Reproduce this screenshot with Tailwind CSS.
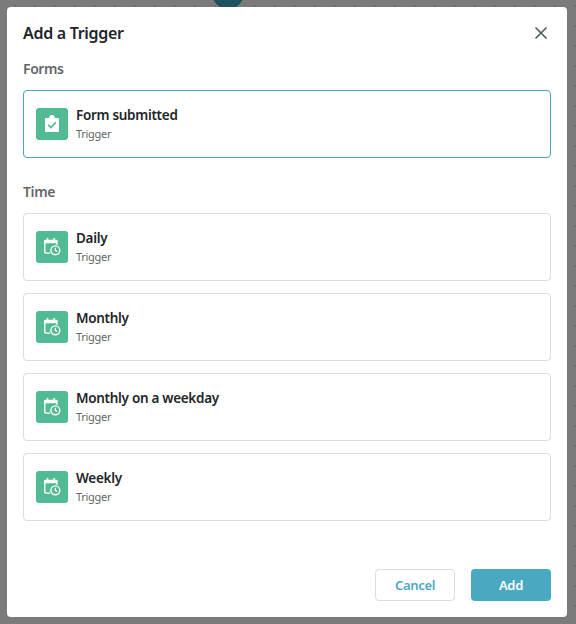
<!DOCTYPE html>
<html>
  <head>
    <meta charset="UTF-8" />
    <meta name="viewport" content="width=device-width, initial-scale=1.0" />
    <script src="https://cdn.jsdelivr.net/npm/@tailwindcss/browser@4"></script>
  </head>

  <body class="w-[576px] h-[624px] overflow-hidden bg-[#7b7b7b] font-['Noto_Sans',sans-serif]">
    <div class="relative h-[624px] pt-[7px] pl-[7px] bg-[radial-gradient(#6c6c6c_1px,transparent_1.5px)] bg-[size:20px_20px] bg-[position:5px_-4px]">
      <div class="absolute left-[212px] top-[-23px] w-8 h-8 rounded-full bg-[#1f5260]"></div>

      <div class="relative w-[560px] h-[610px] bg-white rounded-[4px] px-4 flex flex-col">
        <div class="flex items-center justify-between h-[52px] pb-[1px]">
          <h1 class="text-[16px] font-semibold text-[#212529] tracking-[-0.3px]">Add a Trigger</h1>
          <svg class="w-4 h-4 mr-[2px]" viewBox="0 0 16 16" fill="none" stroke="#4a5b60" stroke-width="1.6">
            <path d="M2.5 2.5l11 11M13.5 2.5l-11 11" />
          </svg>
        </div>

        <h2 class="text-[14px] font-semibold text-[#636669] leading-5 tracking-[-0.4px]">Forms</h2>
        <div class="mt-[11px] h-[68px] border border-[#4ba8c1] rounded-[4px] flex items-center gap-2 px-3">
          <div class="w-8 h-8 rounded-[3px] bg-[#52bb93] flex items-center justify-center">
            <svg class="w-5 h-5" viewBox="0 0 18 18">
              <path fill="#fff" d="M3.5 3.5h3a2.5 2.5 0 0 1 5 0h3a.8.8 0 0 1 .8.8v11a.8.8 0 0 1-.8.8h-11a.8.8 0 0 1-.8-.8v-11a.8.8 0 0 1 .8-.8z" />
              <path fill="none" stroke="#52bb93" stroke-width="1.5" d="M5.5 9.8l2.4 2.4 4.6-4.6" />
            </svg>
          </div>
          <div class="pb-[2px]">
            <div class="text-[13.5px] font-semibold text-[#212529] leading-5 tracking-[-0.3px]">Form submitted</div>
            <div class="text-[11px] text-[#636669] leading-4 mt-[1px] tracking-[-0.3px]">Trigger</div>
          </div>
        </div>

        <h2 class="mt-6 text-[14px] font-semibold text-[#636669] leading-5 tracking-[-0.4px]">Time</h2>
        <div class="mt-[11px] flex flex-col gap-3">
          <div class="h-[68px] border border-[#dcdcdc] rounded-[4px] flex items-center gap-2 px-3">
            <div class="w-8 h-8 rounded-[3px] bg-[#52bb93] flex items-center justify-center">
              <svg class="w-5 h-5" viewBox="0 0 18 18" fill="none" stroke="#fff" stroke-width="1.25">
                <path d="M7.5 14.5H3.2a.7.7 0 0 1-.7-.7V3.7a.7.7 0 0 1 .7-.7h9.6a.7.7 0 0 1 .7.7v3.3" />
                <path fill="#fff" stroke="none" d="M2.5 3h11v2.6h-11zM4.3 1h1.4v2H4.3zM10.3 1h1.4v2h-1.4z" />
                <circle cx="12" cy="12" r="4" />
                <path stroke-width="1.1" d="M12 9.7V12l1.6 1" />
              </svg>
            </div>
            <div class="pb-[2px]">
              <div class="text-[13.5px] font-semibold text-[#212529] leading-5 tracking-[-0.3px]">Daily</div>
              <div class="text-[11px] text-[#636669] leading-4 mt-[1px] tracking-[-0.3px]">Trigger</div>
            </div>
          </div>
          <div class="h-[68px] border border-[#dcdcdc] rounded-[4px] flex items-center gap-2 px-3">
            <div class="w-8 h-8 rounded-[3px] bg-[#52bb93] flex items-center justify-center">
              <svg class="w-5 h-5" viewBox="0 0 18 18" fill="none" stroke="#fff" stroke-width="1.25">
                <path d="M7.5 14.5H3.2a.7.7 0 0 1-.7-.7V3.7a.7.7 0 0 1 .7-.7h9.6a.7.7 0 0 1 .7.7v3.3" />
                <path fill="#fff" stroke="none" d="M2.5 3h11v2.6h-11zM4.3 1h1.4v2H4.3zM10.3 1h1.4v2h-1.4z" />
                <circle cx="12" cy="12" r="4" />
                <path stroke-width="1.1" d="M12 9.7V12l1.6 1" />
              </svg>
            </div>
            <div class="pb-[2px]">
              <div class="text-[13.5px] font-semibold text-[#212529] leading-5 tracking-[-0.3px]">Monthly</div>
              <div class="text-[11px] text-[#636669] leading-4 mt-[1px] tracking-[-0.3px]">Trigger</div>
            </div>
          </div>
          <div class="h-[68px] border border-[#dcdcdc] rounded-[4px] flex items-center gap-2 px-3">
            <div class="w-8 h-8 rounded-[3px] bg-[#52bb93] flex items-center justify-center">
              <svg class="w-5 h-5" viewBox="0 0 18 18" fill="none" stroke="#fff" stroke-width="1.25">
                <path d="M7.5 14.5H3.2a.7.7 0 0 1-.7-.7V3.7a.7.7 0 0 1 .7-.7h9.6a.7.7 0 0 1 .7.7v3.3" />
                <path fill="#fff" stroke="none" d="M2.5 3h11v2.6h-11zM4.3 1h1.4v2H4.3zM10.3 1h1.4v2h-1.4z" />
                <circle cx="12" cy="12" r="4" />
                <path stroke-width="1.1" d="M12 9.7V12l1.6 1" />
              </svg>
            </div>
            <div class="pb-[2px]">
              <div class="text-[13.5px] font-semibold text-[#212529] leading-5 tracking-[-0.3px]">Monthly on a weekday</div>
              <div class="text-[11px] text-[#636669] leading-4 mt-[1px] tracking-[-0.3px]">Trigger</div>
            </div>
          </div>
          <div class="h-[68px] border border-[#dcdcdc] rounded-[4px] flex items-center gap-2 px-3">
            <div class="w-8 h-8 rounded-[3px] bg-[#52bb93] flex items-center justify-center">
              <svg class="w-5 h-5" viewBox="0 0 18 18" fill="none" stroke="#fff" stroke-width="1.25">
                <path d="M7.5 14.5H3.2a.7.7 0 0 1-.7-.7V3.7a.7.7 0 0 1 .7-.7h9.6a.7.7 0 0 1 .7.7v3.3" />
                <path fill="#fff" stroke="none" d="M2.5 3h11v2.6h-11zM4.3 1h1.4v2H4.3zM10.3 1h1.4v2h-1.4z" />
                <circle cx="12" cy="12" r="4" />
                <path stroke-width="1.1" d="M12 9.7V12l1.6 1" />
              </svg>
            </div>
            <div class="pb-[2px]">
              <div class="text-[13.5px] font-semibold text-[#212529] leading-5 tracking-[-0.3px]">Weekly</div>
              <div class="text-[11px] text-[#636669] leading-4 mt-[1px] tracking-[-0.3px]">Trigger</div>
            </div>
          </div>
        </div>

        <div class="mt-auto mb-4 flex justify-end gap-4">
          <button class="w-20 h-8 pt-[1px] border border-[#dcdcdc] rounded-[4px] text-[13px] font-semibold text-[#4ba8c1] tracking-[-0.3px]">Cancel</button>
          <button class="w-20 h-8 pt-[1px] rounded-[4px] bg-[#4ba8c1] text-[13px] font-semibold text-white tracking-[-0.3px]">Add</button>
        </div>
      </div>
    </div>
  </body>
</html>
